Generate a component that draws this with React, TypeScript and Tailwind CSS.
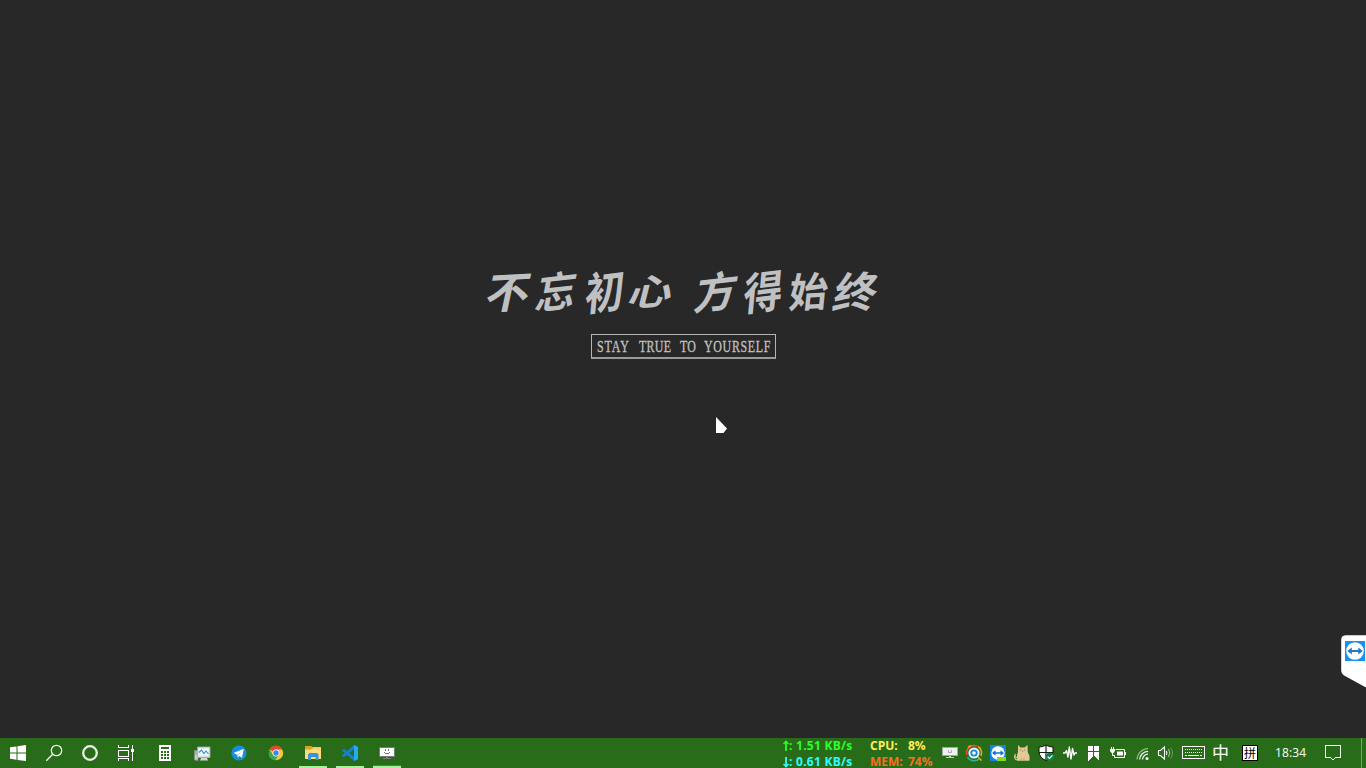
import React from "react";

function Icon({ w, children, crisp }: { w: number; children: React.ReactNode; crisp?: boolean }) {
  return (
    <svg
      width={w}
      height={30}
      viewBox={`0 0 ${w} 30`}
      className="block shrink-0"
      fill="none"
      shapeRendering={crisp ? "crispEdges" : "auto"}
    >
      {children}
    </svg>
  );
}

const glyph = "flex justify-center";
const word = "origin-left scale-x-[0.7] [-webkit-text-stroke:0.35px_#c0c0c0]";

function Slogan() {
  return (
    <div className="flex flex-col items-center pt-[259px]">
      <div className="flex h-[60px] items-center pr-[1px] font-['Noto_Sans_CJK_SC',sans-serif] text-[43px] leading-[60px] font-bold text-[#bfc0c2]">
        <span className={`${glyph} w-12 -skew-x-12 -skew-y-3`}>不</span>
        <span className={`${glyph} w-12 scale-x-90 -skew-x-12 -skew-y-6`}>忘</span>
        <span className={`${glyph} w-12 scale-x-90 scale-y-105 -skew-x-6 -skew-y-6`}>初</span>
        <span className={`${glyph} w-[46px] scale-y-85 -skew-x-12 -skew-y-6`}>心</span>
        <span className={`${glyph} ml-[18px] w-12 scale-x-95 -skew-x-12 -skew-y-6`}>方</span>
        <span className={`${glyph} w-[45px] scale-x-90 scale-y-105 -skew-x-6 -skew-y-6`}>得</span>
        <span className={`${glyph} w-[46px] scale-x-90 scale-y-95 -skew-x-6 -skew-y-3`}>始</span>
        <span className={`${glyph} w-[49px] -skew-x-12 -skew-y-3`}>终</span>
      </div>
      <div className="mt-[15px] ml-[1px] flex h-[25px] w-[185px] items-center border border-b-2 border-[#b4b5b5] border-b-[#999a9a] pl-[5px] font-['Liberation_Serif',serif] text-[17px] leading-[23px] whitespace-nowrap text-[#c0c0c0]">
        <span className={`${word} w-[42px] tracking-[1.3px]`}>STAY</span>
        <span className={`${word} w-[41px] tracking-[0.4px]`}>TRUE</span>
        <span className={`${word} w-[24px] tracking-[0.4px]`}>TO</span>
        <span className={`${word} w-[67px] tracking-[1px]`}>YOURSELF</span>
      </div>
      <svg width="14" height="18" viewBox="0 0 14 18" className="mt-[58px] ml-[78px]">
        <path d="M1 0V16H8.5L12 11.5Z" fill="#fff" />
      </svg>
    </div>
  );
}

function TeamViewerTab() {
  return (
    <svg width="26" height="54" viewBox="0 0 26 54" className="absolute top-[635px] right-0">
      <path d="M26 0.2H5.5Q1.2 0.5 1.2 5V35Q1.2 39 5 41L26 52.5Z" fill="#fff" />
      <path d="M5 6H25V26H5Z" fill="#1592f4" />
      <circle cx="15" cy="16" r="8.8" fill="#fff" />
      <path d="M7.3 16L11.8 12.6V14.9H18.3V12.6L22.8 16L18.3 19.4V17.1H11.8V19.4Z" fill="#2878c0" />
    </svg>
  );
}

function Launchers() {
  return (
    <div className="flex w-[406px] shrink-0">
      <Icon w={36}>
        <path d="M10 9.3L16.5 8.4V14.5H10ZM17.5 8.2L26 7V14.5H17.5ZM10 15.5H16.5V21.7L10 20.8ZM17.5 15.5H26V23L17.5 21.9Z" fill="#fff" />
      </Icon>
      <Icon w={36}>
        <circle cx="20.5" cy="12.5" r="5.2" stroke="#f4f8f3" strokeWidth="1.3" />
        <path d="M16.7 16.3L10.3 22.7" stroke="#f4f8f3" strokeWidth="1.4" />
      </Icon>
      <Icon w={36}>
        <circle cx="18" cy="15" r="6.8" stroke="#e9f1e7" strokeWidth="2.3" />
      </Icon>
      <Icon w={36} crisp>
        <path d="M10.5 7V9.5H20.5V7M10.5 12.5H20.5V18.5H10.5ZM10.5 23V20.5H20.5V23M24.5 7V11M24.5 14V23" stroke="#fff" />
        <path d="M23 11H26V14H23Z" fill="#fff" />
      </Icon>
      <div className="w-[3px]" />
      <Icon w={37} crisp>
        <path d="M12 7H24V23H12Z" fill="#fff" />
        <path d="M14 9H22V11H14ZM14 13H16V15H14ZM17 13H19V15H17ZM20 13H22V15H20ZM14 16H16V18H14ZM17 16H19V18H17ZM20 16H22V18H20ZM14 19H16V21H14ZM17 19H19V21H17ZM20 19H22V21H20Z" fill="#286c1a" />
      </Icon>
      <Icon w={37}>
        <path d="M10.5 12.5H14V22H10.5Z" fill="#c9d0d0" stroke="#85908c" strokeWidth="0.7" />
        <path d="M13.5 9H26V19.5H13.5Z" fill="#dde2e3" stroke="#a5adaf" strokeWidth="0.8" />
        <path d="M15 10.5H24.5V17.5H15Z" fill="#eef9ff" />
        <path d="M15 14.5L17.5 12L20 15.5L22 13L24.5 16" stroke="#2c91c5" strokeWidth="1.1" />
        <path d="M17 20H23L24 22.5H16Z" fill="#d4d9d8" />
        <path d="M11 14H13M11 16H13M11 22.5H15" stroke="#7d8582" strokeWidth="0.8" />
      </Icon>
      <Icon w={37}>
        <circle cx="18" cy="15" r="7.6" fill="#168fdb" />
        <path d="M12.5 15L22.8 10.8L21 19.8L18.3 18L16.9 19.4L16.4 17Z" fill="#fff" />
        <path d="M16.4 17L21 12.6L17.3 17.4L16.9 19.4Z" fill="#a8cbdc" />
      </Icon>
      <Icon w={37}>
        <circle cx="18" cy="15" r="7.2" fill="#f8c934" />
        <path d="M18 15L11.8 11.4A7.2 7.2 0 0 1 24.3 11.5H18Z" fill="#e64435" />
        <path d="M11.8 11.4A7.2 7.2 0 0 0 17.3 22.2L21 16.8L15 17Z" fill="#35a956" />
        <circle cx="18" cy="15" r="3.4" fill="#fff" />
        <circle cx="18" cy="15" r="2.7" fill="#3f83f0" />
      </Icon>
      <Icon w={37}>
        <path d="M10 8H16.5L18 9.7V12H10Z" fill="#dfa21c" />
        <path d="M18 9H26V12H16Z" fill="#f7cd65" />
        <path d="M10 11.5H26V21H10Z" fill="#ffdc7b" />
        <path d="M13 22V16.5L14.5 15H22L23.5 16.5V22H20.5V19H16V22Z" fill="#3594dc" />
        <path d="M4 28H32V30H4Z" fill="#a6f39b" />
      </Icon>
      <Icon w={37}>
        <path d="M22 7L26 9V21L22 23L10 12.5L12 10.7L22 18.8V11.2L12 19.3L10 17.5Z" fill="#1680cc" />
        <path d="M22 7L26 9V21L22 23Z" fill="#29a8f3" />
        <path d="M4 28H32V30H4Z" fill="#a6f39b" />
      </Icon>
      <Icon w={37} crisp>
        <path d="M10 9H26V19H10Z" fill="#777d76" />
        <path d="M11 10H25V18H11Z" fill="#fff" />
        <path d="M16 11H17V13H16ZM19 11H20V13H19ZM15 14H16V15H15ZM20 14H21V15H20ZM16 15H20V16H16Z" fill="#777" />
        <path d="M17 19H19V20H17ZM14 20H22V21H14Z" fill="#777d76" />
        <path d="M4 27H32V28H4Z" fill="#2f9b1c" />
        <path d="M4 28H32V30H4Z" fill="#a6f39b" />
      </Icon>
    </div>
  );
}

function Arrow({ down }: { down: boolean }) {
  return (
    <svg width="6" height="14" viewBox="0 0 6 14" className={down ? "rotate-180" : ""} fill="none" stroke="currentColor">
      <path d="M3 2V12" strokeWidth="1.8" />
      <path d="M0.5 5L3 2.2L5.5 5" strokeWidth="1.4" />
    </svg>
  );
}

function Monitor() {
  return (
    <div className="flex w-[155px] shrink-0 font-['Open_Sans',sans-serif] text-[12px] font-bold whitespace-nowrap">
      <div className="w-[87px]">
        <div className="flex h-4 items-center leading-4 tracking-[0.26px] text-[#2bff2b]">
          <Arrow down={false} />
          <span>: 1.51 KB/s</span>
        </div>
        <div className="mt-px flex h-[13px] items-center leading-[13px] tracking-[0.26px] text-[#2bffff]">
          <Arrow down />
          <span>: 0.61 KB/s</span>
        </div>
      </div>
      <div>
        <div className="flex h-4 items-center leading-4 text-[#ffee58]">
          <span className="w-[38px]">CPU:</span>
          <span>8%</span>
        </div>
        <div className="mt-px flex h-[13px] items-center leading-[13px] text-[#ff6c20]">
          <span className="w-[38px]">MEM:</span>
          <span>74%</span>
        </div>
      </div>
    </div>
  );
}

function Tray() {
  return (
    <div className="flex shrink-0">
      <Icon w={24} crisp>
        <path d="M4 9H20V18H4Z" fill="#a5a9a4" />
        <path d="M5 10H19V17H5Z" fill="#f1f1f1" />
        <path d="M10 12H11V14H10ZM13 12H14V14H13ZM10 14H14V15H10Z" fill="#b0b0b0" />
        <path d="M11 18H13V19H11ZM8 19H16V20H8Z" fill="#c5c9c4" />
      </Icon>
      <Icon w={24}>
        <path d="M5 17A7.3 7.3 0 0 1 15 8.2" stroke="#f44c35" strokeWidth="1.5" />
        <path d="M6 9.5A8 8 0 0 1 9 7.6M16 8.5A7.5 7.5 0 0 1 19 18" stroke="#f9a81d" strokeWidth="1.5" />
        <path d="M5.5 19A7.5 7.5 0 0 0 17.5 20.5" stroke="#24b5a9" strokeWidth="1.5" />
        <circle cx="12" cy="15" r="5.6" fill="#e7f5ff" />
        <circle cx="12" cy="15" r="2.7" fill="#fff" stroke="#1688d6" strokeWidth="1.8" />
        <path d="M16 19L19.5 22.5" stroke="#f9a81d" strokeWidth="1.5" />
      </Icon>
      <Icon w={24}>
        <path d="M4 7H20V23H4Z" fill="#1384e5" />
        <circle cx="12" cy="15" r="6.7" fill="#fff" />
        <path d="M6 15L9.5 12.3V14.2H14.5V12.3L18 15L14.5 17.7V15.8H9.5V17.7Z" fill="#176ed0" />
        <path d="M11 19H20V23H11Z" fill="#83dc21" />
      </Icon>
      <Icon w={24}>
        <path d="M8 7L10.4 9.5H14.5L17.5 7L17.7 14L19.5 18V22.7H7V17L8 14Z" fill="#e3c998" />
        <path d="M8 20Q4 19 5.5 16Q3 20 7 22" stroke="#d5b982" strokeWidth="1.3" />
        <path d="M10.2 12H11.2M14.3 12H15.3M12.2 13.2H13.2" stroke="#725b42" strokeWidth="0.9" />
        <path d="M11 20V22.5M14 20V22.5" stroke="#b69868" strokeWidth="0.7" />
      </Icon>
      <Icon w={24}>
        <path d="M12 7Q15 9 19 9V14Q18.5 20 12 22.5Q5.5 20 5 14V9Q9 9 12 7Z" fill="#fff" stroke="#111" />
        <path d="M12 7V22M5 14.5H19" stroke="#171d16" strokeWidth="1.2" />
        <circle cx="16" cy="18.8" r="4.1" fill="#118047" />
        <path d="M13.7 18.8L15.5 20.5L18.4 17.3" stroke="#fff" strokeWidth="1.2" />
      </Icon>
      <Icon w={24}>
        <path d="M5 15H7L8.5 12.5L10 19L11.3 9L13 21L14.5 10.5L16 17L17 15H19" stroke="#fff" strokeWidth="1.4" strokeLinejoin="round" />
      </Icon>
      <Icon w={24} crisp>
        <path d="M6 8H11V13H6ZM12 8H17V13H12ZM6 14H11V18L6 23ZM12 14H17V23L12 18Z" fill="#fff" />
      </Icon>
      <Icon w={24}>
        <path d="M9.5 11.5H18.5V19.5H8.5V17M19.5 14V17" stroke="#fff" />
        <path d="M11 13.5H17V17.5H11Z" fill="#fff" />
        <path d="M4 11H9V13L7.5 15H5.5L4 13ZM5 9H6V11H5ZM7 9H8V11H7Z" fill="#fff" />
        <path d="M6.5 15V17.5H9" stroke="#fff" />
      </Icon>
      <Icon w={24}>
        <path d="M7 21.5A11.5 11.5 0 0 1 18 10.5" stroke="#9fbd98" strokeWidth="1.2" />
        <path d="M9.7 21.5A8.5 8.5 0 0 1 18 13.3M12.5 21.5A5.5 5.5 0 0 1 18 16.2" stroke="#fff" strokeWidth="1.2" />
        <circle cx="17" cy="20.5" r="1.5" fill="#fff" />
      </Icon>
      <Icon w={24}>
        <path d="M4.5 12.5H6.5L10.5 9V21L6.5 17.5H4.5Z" stroke="#fff" strokeWidth="1.1" />
        <path d="M12.3 13Q13.5 15 12.3 17" stroke="#fff" strokeWidth="1.1" />
        <path d="M14.5 11Q17 15 14.5 19" stroke="#a9c5a3" />
        <path d="M16.5 9.5Q20.5 15 16.5 20.5" stroke="#70985f" />
      </Icon>
    </div>
  );
}

function InputAndClock() {
  return (
    <div className="flex h-[30px] flex-1 items-center whitespace-nowrap text-white">
      <Icon w={32} crisp>
        <path d="M4.5 8.5H26.5V20.5H4.5Z" stroke="#fff" />
        <path d="M7 11.5H25M7 14.5H25" stroke="#fff" strokeDasharray="1 1" />
        <path d="M7 17.5H9M10 17.5H21M22 17.5H24" stroke="#fff" />
      </Icon>
      <span className="mb-[2px] w-[32px] pl-[2px] font-['Noto_Sans_CJK_SC',sans-serif] text-[17px] leading-[28px]">中</span>
      <span className="flex h-4 w-4 items-center justify-center border border-black bg-white font-['Noto_Sans_CJK_SC',sans-serif] text-[12px] leading-[14px] text-black">拼</span>
      <span className="ml-[17px] w-[46px] font-['Open_Sans',sans-serif] text-[12px] leading-[30px] tracking-[0.15px]">18:34</span>
      <Icon w={24} crisp>
        <path d="M4.5 7.5H19.5V19.5H14.5L12 22L9.5 19.5H4.5Z" stroke="#fff" />
      </Icon>
      <div className="ml-auto mr-1 h-full w-px bg-[#79a370]" />
    </div>
  );
}

export default function App() {
  return (
    <div className="relative flex h-[768px] w-[1366px] flex-col overflow-hidden bg-[#282828]">
      <main className="h-[738px] shrink-0">
        <Slogan />
      </main>
      <TeamViewerTab />
      <footer className="flex h-[30px] shrink-0 bg-[#286c1a]">
        <Launchers />
        <div className="flex-1" />
        <Monitor />
        <Tray />
        <div className="flex w-[188px] shrink-0">
          <InputAndClock />
        </div>
      </footer>
    </div>
  );
}
